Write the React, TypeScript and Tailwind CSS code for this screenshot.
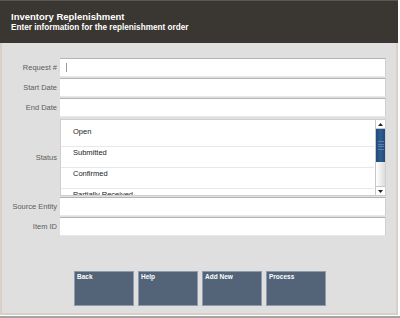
import React from "react";

const font = "font-['Liberation_Sans',Arial,sans-serif]";

function Field({ label, cursor }: { label: string; cursor?: boolean }) {
  return (
    <div className="flex items-center h-[19px] mb-[1px]">
      <div className="w-[55px] text-right text-[7.5px] leading-[10px] text-[#5c5c5c] pr-0">{label}</div>
      <div className="ml-[3px] w-[326px] h-[19px] bg-white border-t border-[#b4b4b4] border-b border-b-[#e8e8e8] border-r border-r-[#d0d0d0] flex items-center">
        {cursor && <div className="ml-[6px] w-[1px] h-[9px] bg-[#9a9a9a]" />}
      </div>
    </div>
  );
}

export default function App() {
  const statuses = ["Open", "Submitted", "Confirmed", "Partially Received"];
  const buttons = ["Back", "Help", "Add New", "Process"];
  return (
    <div className={`w-[400px] h-[318px] bg-white flex flex-col ${font}`}>
      <div className="w-[398px] h-[315px] flex flex-col">
        <div className="h-[43px] bg-[#3a3632] border-t border-[#5a5652] pl-[11px] pt-[11px] text-white font-bold">
          <div className="text-[9.5px] leading-[10px]">Inventory Replenishment</div>
          <div className="text-[8.2px] leading-[10px] mt-[0.5px]">Enter information for the replenishment order</div>
        </div>
        <div className="flex-1 bg-[#dfdfdf] border-l-2 border-r-2 border-b-2 border-[#d8cfc6] pt-[15px] flex flex-col">
          <Field label="Request #" cursor />
          <Field label="Start Date" />
          <Field label="End Date" />
          <div className="flex items-center h-[77px] mt-[1px] mb-[1px]">
            <div className="w-[55px] text-right text-[7.5px] leading-[10px] text-[#5c5c5c]">Status</div>
            <div className="ml-[3px] w-[326px] h-[77px] bg-white border border-[#cfcfcf] relative overflow-hidden">
              <div className="pt-[6px] pr-[11px]">
                {statuses.map((s) => (
                  <div key={s} className="h-[21px] border-b border-[#e8e8e8] pl-[12px] pt-[1px] text-[7.5px] leading-[9px] text-[#222]">
                    {s}
                  </div>
                ))}
              </div>
              <div className="absolute right-0 top-0 bottom-0 w-[10px] border-l border-[#c8c8c8] flex flex-col bg-gradient-to-r from-[#ffffff] to-[#dcdcdc]">
                <div className="h-[9px] bg-white border-b border-[#c8c8c8] flex items-center justify-center">
                  <svg width="5" height="3" viewBox="0 0 5 3"><path d="M2.5 0 L5 3 L0 3 Z" fill="#222" /></svg>
                </div>
                <div className="h-[33px] bg-gradient-to-r from-[#23497a] via-[#2f5d91] to-[#23497a] flex flex-col items-center justify-center gap-[1.5px]">
                  <div className="w-[6px] h-[1px] bg-[#5a7fa8]" />
                  <div className="w-[6px] h-[1px] bg-[#5a7fa8]" />
                  <div className="w-[6px] h-[1px] bg-[#5a7fa8]" />
                  <div className="w-[6px] h-[1px] bg-[#5a7fa8]" />
                </div>
                <div className="flex-1" />
                <div className="h-[9px] bg-white border-t border-[#c8c8c8] flex items-center justify-center">
                  <svg width="5" height="3" viewBox="0 0 5 3"><path d="M0 0 L5 0 L2.5 3 Z" fill="#222" /></svg>
                </div>
              </div>
            </div>
          </div>
          <Field label="Source Entity" />
          <Field label="Item ID" />
          <div className="flex gap-[4px] pl-[72px] mt-[34px]">
            {buttons.map((b) => (
              <div key={b} className="w-[60px] h-[35px] bg-[#536479] border border-[#8d9baa] pl-[2px] pt-[1px] text-white font-bold text-[6.5px] leading-[8px]">
                {b}
              </div>
            ))}
          </div>
        </div>
      </div>
      <div className="h-[1px]" />
      <div className="h-[2px] bg-[#a3a3a3]" />
    </div>
  );
}
